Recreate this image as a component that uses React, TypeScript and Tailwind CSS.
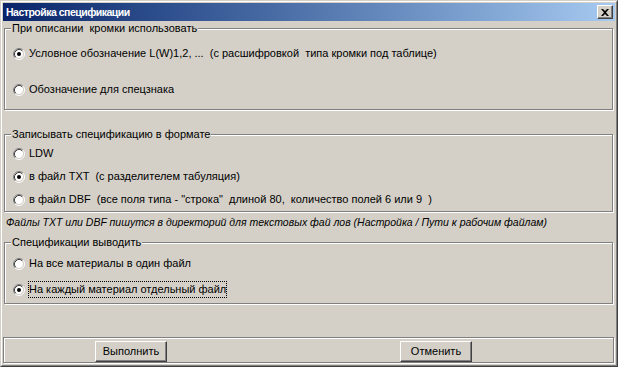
import React from "react";

const font = { fontFamily: '"Liberation Sans", Arial, sans-serif' };

function Radio({ checked }: { checked?: boolean }) {
  return (
    <svg width="12" height="12" viewBox="0 0 12 12" className="shrink-0">
      <circle cx="6" cy="6" r="4.5" fill="#ffffff" />
      <path d="M2.11 9.89 A5.5 5.5 0 0 1 9.89 2.11" stroke="#808080" strokeWidth="1" fill="none" />
      <path d="M9.89 2.11 A5.5 5.5 0 0 1 2.11 9.89" stroke="#ffffff" strokeWidth="1" fill="none" />
      <path d="M2.82 9.18 A4.5 4.5 0 0 1 9.18 2.82" stroke="#404040" strokeWidth="1" fill="none" />
      <path d="M9.18 2.82 A4.5 4.5 0 0 1 2.82 9.18" stroke="#d4d0c8" strokeWidth="1" fill="none" />
      {checked && <circle cx="6" cy="6" r="2" fill="#000000" />}
    </svg>
  );
}

function Option({ label, checked, focused }: { label: string; checked?: boolean; focused?: boolean }) {
  return (
    <div className="flex h-[17px] items-center gap-[3px]">
      <Radio checked={checked} />
      <span
        className={`whitespace-pre border leading-[15px] ${
          focused ? "border-dotted border-black" : "border-transparent"
        }`}
      >
        {label}
      </span>
    </div>
  );
}

function Group({
  title,
  className,
  children,
}: {
  title: string;
  className: string;
  children: React.ReactNode;
}) {
  return (
    <div
      className={`relative w-[609px] border border-[#808080] pl-[8px] shadow-[inset_1px_1px_0_#ffffff,1px_1px_0_#ffffff] flex flex-col ${className}`}
    >
      <span className="absolute left-[6px] top-[-7px] whitespace-pre bg-[#d4d0c8] px-[1px] leading-[13px]">
        {title}
      </span>
      {children}
    </div>
  );
}

function Button({ label }: { label: string }) {
  return (
    <button className="flex h-[21px] w-[72px] items-center justify-center border border-b-[#404040] border-l-white border-r-[#404040] border-t-white bg-[#d4d0c8] text-[11px] leading-none text-black shadow-[inset_-1px_-1px_0_#808080]">
      {label}
    </button>
  );
}

export default function App() {
  return (
    <div
      className="h-[367px] w-[618px] border border-b-[#404040] border-l-[#d4d0c8] border-r-[#404040] border-t-[#d4d0c8] bg-[#d4d0c8] text-[11px] text-black"
      style={font}
    >
      <div className="flex h-full flex-col border border-b-[#808080] border-l-white border-r-[#808080] border-t-white p-[1px]">
        {/* Title bar */}
        <div className="flex h-[18px] shrink-0 items-center justify-between bg-gradient-to-r from-[#0a246a] to-[#a6caf0] pl-[3px] pr-[2px]">
          <span className="text-[10.5px] font-bold leading-none tracking-[-0.5px] text-white">Настройка спецификации</span>
          <div className="flex h-[14px] w-[16px] items-center justify-center border border-b-[#404040] border-l-white border-r-[#404040] border-t-white bg-[#d4d0c8] shadow-[inset_-1px_-1px_0_#808080]">
            <svg width="8" height="7" viewBox="0 0 8 7">
              <path d="M0 0h2l2 2 2-2h2L5 3.5 8 7H6L4 5 2 7H0l3-3.5z" fill="#000" />
            </svg>
          </div>
        </div>

        {/* Body */}
        <div className="flex flex-1 flex-col pl-[1px]">
          <Group title="При описании  кромки использовать" className="mt-[7px] h-[82px] gap-[19px] pt-[16px]">
            <Option checked label="Условное обозначение L(W)1,2, ...  (с расшифровкой  типа кромки под таблице)" />
            <Option label="Обозначение для спецзнака" />
          </Group>

          <Group title="Записывать спецификацию в формате" className="mt-[24px] h-[78px] gap-[6px] pt-[10px]">
            <Option label="LDW" />
            <Option checked label="в файл TXT  (с разделителем табуляция)" />
            <Option label={'в файл DBF  (все поля типа - "строка"  длиной 80,  количество полей 6 или 9  )'} />
          </Group>

          <p className="mt-[3px] whitespace-pre pl-[2px] text-[10.5px] italic leading-[14px]">
            Файлы TXT или DBF пишутся в директорий для текстовых фай лов (Настройка / Пути к рабочим файлам)
          </p>

          <Group title="Спецификации выводить" className="mt-[13px] h-[62px] gap-[9px] pt-[12px]">
            <Option label="На все материалы в один файл" />
            <Option checked focused label="На каждый материал отдельный файл" />
          </Group>
        </div>

        {/* Button panel */}
        <div className="mb-[1px] flex h-[26px] w-[611px] shrink-0 gap-[233px] border border-[#808080] pl-[91px] pt-[3px] shadow-[inset_1px_1px_0_#ffffff,1px_1px_0_#ffffff]">
          <Button label="Выполнить" />
          <Button label="Отменить" />
        </div>
      </div>
    </div>
  );
}
